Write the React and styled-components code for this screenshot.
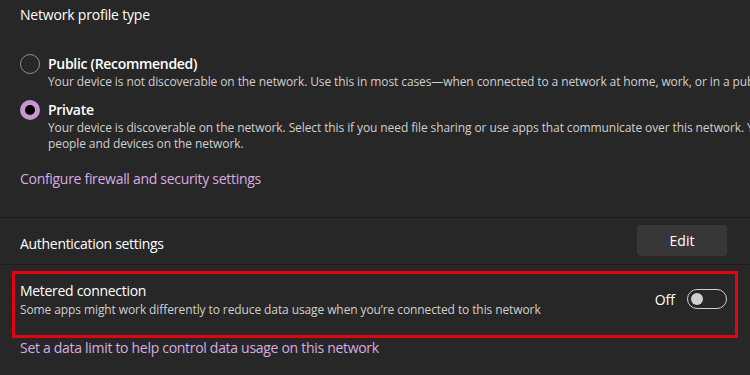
import React from "react";
import styled, { createGlobalStyle } from "styled-components";

const Global = createGlobalStyle`
  html, body { margin: 0; padding: 0; background: #272727; }
  body { font-family: "Segoe UI", "Open Sans", "Noto Sans", sans-serif; color: #ffffff; overflow: hidden; }
  * { box-sizing: border-box; }
`;

const Page = styled.div`
  width: 750px;
  height: 375px;
  background: #272727;
  overflow: hidden;
`;

const Section = styled.div`
  padding: 0 0 0 20px;
`;

const Heading = styled.div`
  font-size: 14px;
  letter-spacing: -0.2px;
  line-height: 20px;
  padding-top: 5px;
  color: #ffffff;
`;

const RadioGroup = styled.div`
  display: flex;
  flex-direction: column;
  gap: 10px;
  margin-top: 29px;
`;

const Option = styled.div`
  display: flex;
  gap: 8px;
  align-items: flex-start;
`;

const Radio = styled.span`
  flex: none;
  width: 20px;
  height: 20px;
  border-radius: 50%;
  display: flex;
  align-items: center;
  justify-content: center;
  ${(p) =>
    p.$checked
      ? `background: #c897d3; border: none;`
      : `background: transparent; border: 1px solid #8d8d8d;`}
`;

const Dot = styled.span`
  width: 10px;
  height: 10px;
  border-radius: 50%;
  background: #000;
`;

const OptionText = styled.div`
  display: flex;
  flex-direction: column;
  white-space: nowrap;
`;

const OptionTitle = styled.div`
  font-size: 14px;
  font-weight: 600;
  letter-spacing: -0.3px;
  line-height: 20px;
`;

const Desc = styled.div`
  font-size: 12px;
  letter-spacing: -0.1px;
  line-height: 16px;
  color: #cfcfcf;
  margin-top: ${(p) => p.$top || 0}px;
`;

const Link = styled.div`
  font-size: 14px;
  letter-spacing: -0.3px;
  line-height: 20px;
  color: #d9abe3;
  margin-top: ${(p) => p.$top || 0}px;
  padding-left: 20px;
`;

const Divider = styled.div`
  height: 1px;
  background: #1c1c1c;
  margin-top: ${(p) => p.$top || 0}px;
`;

const Row = styled.div`
  height: 46px;
  display: flex;
  align-items: center;
  justify-content: space-between;
  padding: 0 23px 0 20px;
  font-size: 14px;
  letter-spacing: -0.3px;
`;

const RowLabel = styled.span`
  padding-top: 5px;
`;

const EditButton = styled.button`
  width: 90px;
  height: 31px;
  border-radius: 4px;
  background: #373737;
  border: 1px solid #3a3a3a;
  color: #ffffff;
  font-family: inherit;
  font-size: 14px;
  margin-top: -2px;
`;

const Highlight = styled.div`
  margin: 6px 12px 0 12px;
  height: 67px;
  border: 3px solid #e3040f;
  display: flex;
  align-items: flex-start;
  justify-content: space-between;
  padding: 8px 8px 0 5px;
`;

const MeterText = styled.div`
  display: flex;
  flex-direction: column;
  white-space: nowrap;
`;

const MeterTitle = styled.div`
  font-size: 14px;
  letter-spacing: -0.3px;
  line-height: 18px;
`;

const ToggleWrap = styled.div`
  display: flex;
  align-items: center;
  gap: 12px;
  font-size: 14px;
  margin-top: 7px;
`;

const Toggle = styled.span`
  width: 40px;
  height: 20px;
  border-radius: 10px;
  border: 1px solid #cfcfcf;
  display: flex;
  align-items: center;
  padding-left: 3px;
`;

const Knob = styled.span`
  width: 12px;
  height: 12px;
  border-radius: 50%;
  background: #d0d0d0;
`;

export default function App() {
  return (
    <Page>
      <Global />
      <Section>
        <Heading>Network profile type</Heading>
        <RadioGroup>
          <Option>
            <Radio />
            <OptionText>
              <OptionTitle>Public (Recommended)</OptionTitle>
              <Desc>
                Your device is not discoverable on the network. Use this in most cases—when connected to a network at home, work, or in a public place.
              </Desc>
            </OptionText>
          </Option>
          <Option>
            <Radio $checked>
              <Dot />
            </Radio>
            <OptionText>
              <OptionTitle>Private</OptionTitle>
              <Desc>
                Your device is discoverable on the network. Select this if you need file sharing or use apps that communicate over this network. You should know and trust the
              </Desc>
              <Desc>people and devices on the network.</Desc>
            </OptionText>
          </Option>
        </RadioGroup>
      </Section>
      <Link $top={17}>Configure firewall and security settings</Link>
      <Divider $top={28} />
      <Row>
        <RowLabel>Authentication settings</RowLabel>
        <EditButton>Edit</EditButton>
      </Row>
      <Divider />
      <Highlight>
        <MeterText>
          <MeterTitle>Metered connection</MeterTitle>
          <Desc $top={2}>Some apps might work differently to reduce data usage when you’re connected to this network</Desc>
        </MeterText>
        <ToggleWrap>
          <span>Off</span>
          <Toggle>
            <Knob />
          </Toggle>
        </ToggleWrap>
      </Highlight>
      <Link $top={0}>Set a data limit to help control data usage on this network</Link>
    </Page>
  );
}
